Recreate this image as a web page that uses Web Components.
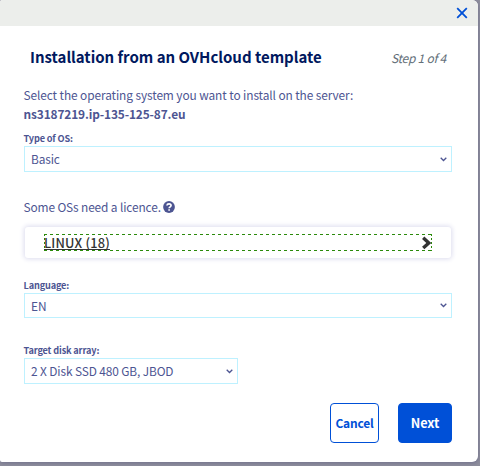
<!DOCTYPE html>
<html lang="en">
<head>
<meta charset="utf-8">
<title>Installation</title>
<style>
body{margin:0;width:480px;height:466px;overflow:hidden;background:#8e8e9c;font-family:"Noto Sans CJK SC","Source Sans Pro",sans-serif;color:#4d5592}
</style>
</head>
<body>
<install-dialog></install-dialog>
<script>
const define = (name, html) => {
  const t = document.createElement('template');
  t.innerHTML = html;
  customElements.define(name, class extends HTMLElement {
    constructor() {
      super();
      this.attachShadow({mode: 'open'}).append(t.content.cloneNode(true));
    }
  });
};

define('select-field', `
<style>
:host{display:block}
.label{height:14px;line-height:13px;font-size:9.2px;font-weight:700;letter-spacing:-.16px;white-space:nowrap;margin-left:-.5px}
.box{box-sizing:border-box;height:var(--h,26px);border:1px solid #bef1ff;padding:0 4px 0 6px;display:flex;align-items:center;justify-content:space-between;font-size:11.9px;line-height:20px;letter-spacing:-.12px;white-space:nowrap}
svg{display:block;flex:none}
</style>
<div class="label"><slot name="label"></slot></div>
<div class="box"><slot></slot><svg width="7" height="5" viewBox="0 0 7 5"><path d="M.7 .8 3.5 3.5 6.3 .8" fill="none" stroke="#4d5592" stroke-width="1.3"/></svg></div>`);

define('os-family', `
<style>
:host{display:block;box-sizing:border-box;height:31px;margin:0 1px;padding:7px 19px;border-radius:3px;background:#fff;box-shadow:0 0 5px 1px #dcdcee}
.row{box-sizing:border-box;height:17px;display:flex;justify-content:space-between;align-items:center;background:
 repeating-linear-gradient(90deg,#2b8a0b 0 3px,transparent 3px 6px) 0 0/100% 1px no-repeat,
 repeating-linear-gradient(90deg,#2b8a0b 0 3px,transparent 3px 6px) 0 100%/100% 1px no-repeat,
 repeating-linear-gradient(#2b8a0b 0 2px,transparent 2px 4px) 0 0/1px 100% no-repeat,
 repeating-linear-gradient(#2b8a0b 0 2px,transparent 2px 4px) 100% 0/1px 100% no-repeat;color:#333;font-weight:500;font-size:12.8px;line-height:17px}
span{letter-spacing:.2px;text-decoration:underline;text-decoration-skip-ink:none;text-underline-offset:1px;text-decoration-thickness:1px}
svg{display:block}
</style>
<div class="row"><span><slot></slot></span><svg width="11" height="14" viewBox="0 0 11 14"><path d="M2.2 1.8 7.8 6.9 2.2 12" fill="none" stroke="#333" stroke-width="3.4"/></svg></div>`);

define('action-button', `
<style>
:host{display:flex;align-items:center;justify-content:center;box-sizing:border-box;height:40px;border:1px solid #0050d7;border-radius:4px;color:#0050d7;background:#fff;font-weight:700;line-height:20px;white-space:nowrap}
:host([primary]){background:#0050d7;color:#fff}
</style><slot></slot>`);

define('install-dialog', `
<style>
:host{display:block;box-sizing:border-box;width:478px;height:462px;background:#fff;border-radius:2px 6px 6px 2px;overflow:hidden;box-shadow:0 1px 4px #70708c}
.bar{height:26px;background:#eceeeb;display:flex;justify-content:flex-end;align-items:center;padding-right:10px;box-sizing:border-box}
.bar svg{display:block}
main{padding:0 26px 0 24px}
header{display:flex;justify-content:space-between;align-items:baseline;padding:19px 6px 0;height:59px;box-sizing:border-box;white-space:nowrap}
h1{margin:0;font-size:15px;line-height:24px;font-weight:700;color:#00185e;letter-spacing:-.02px}
em{font-size:12px;line-height:20px;color:#636f79;letter-spacing:-.25px}
p{margin:0 0 0 -.5px;font-size:11.9px;line-height:19px;white-space:nowrap;letter-spacing:-.1px}
.b{letter-spacing:-.13px}
.intro{height:47px}
.note{display:flex;align-items:center;gap:2px;height:20px;margin:24px 0 11px}
.note p{letter-spacing:-.13px}
.note svg{margin-top:2px}
os-family+select-field{margin-top:21px;--h:25px}
.disk{margin-top:26px;width:214px}
footer{display:flex;justify-content:flex-end;gap:19px;margin-top:19px}
.cancel{width:49px;font-size:12px;letter-spacing:-.2px}
.next{width:54px;font-size:12.7px}
</style>
<div class="bar"><svg width="12" height="12" viewBox="0 0 12 12"><path d="M1.2 1.2 10.8 10.8M10.8 1.2 1.2 10.8" stroke="#0050d7" stroke-width="1.8"/></svg></div>
<main>
<header><h1>Installation from an OVHcloud template</h1><em>Step 1 of 4</em></header>
<div class="intro"><p class="a">Select the operating system you want to install on the server:</p><p class="b"><b>ns3187219.ip-135-125-87.eu</b></p></div>
<select-field class="type"><span slot="label">Type of OS:</span><span>Basic</span></select-field>
<div class="note"><p>Some OSs need a licence.</p><svg width="12" height="12" viewBox="0 0 11 11"><circle cx="5.5" cy="5.5" r="5.4" fill="#4d5592"/><path d="M3.6 4.1C3.8 2.1 7.4 2.1 7.4 4.2 7.4 5.4 5.6 5.3 5.6 6.7M5.6 7.5V9" fill="none" stroke="#fff" stroke-width="1.5"/></svg></div>
<os-family>LINUX (18)</os-family>
<select-field class="lang"><span slot="label">Language:</span><span>EN</span></select-field>
<select-field class="disk"><span slot="label">Target disk array:</span><span>2 X Disk SSD 480 GB, JBOD</span></select-field>
<footer><action-button class="cancel">Cancel</action-button><action-button class="next" primary>Next</action-button></footer>
</main>`);
</script>
</body>
</html>
